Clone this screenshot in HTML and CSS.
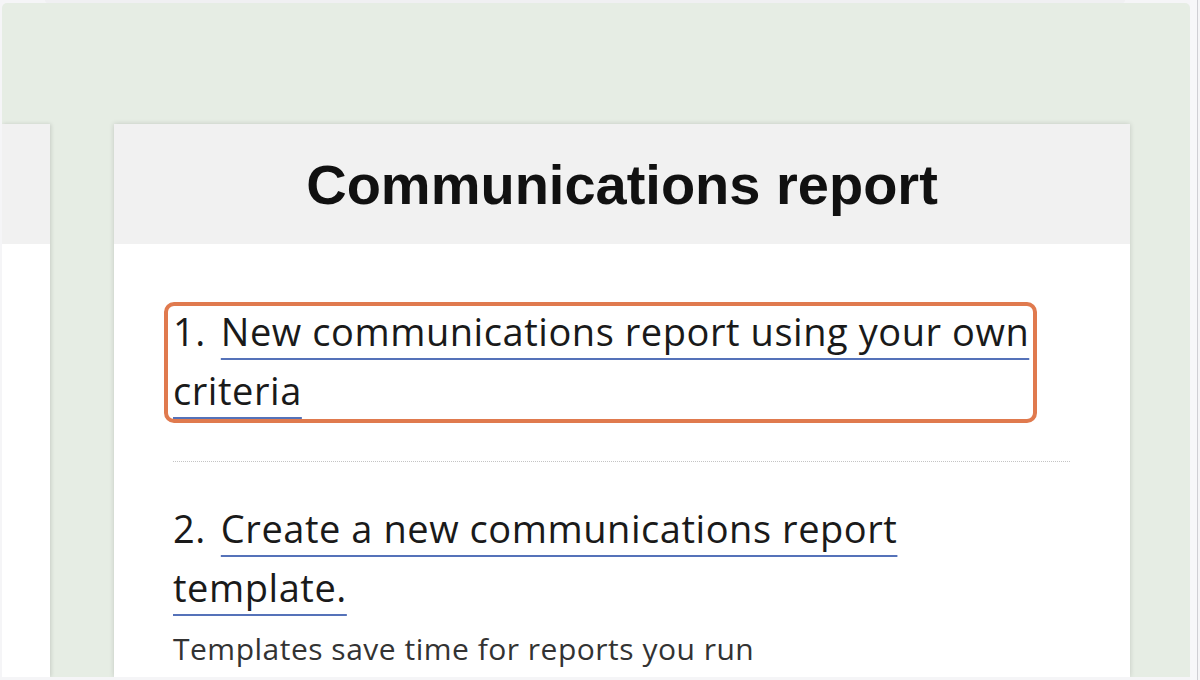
FILE: index.html
```html
<!DOCTYPE html>
<html lang="en">
<head>
<meta charset="utf-8">
<title>Communications report</title>
<link rel="stylesheet" href="styles.css">
</head>
<body>
<div class="screen">
  <div class="main-col">
    <div class="top-strip"><div class="prev-card"></div></div>
    <div class="stage">
      <div class="side-card">
        <div class="side-head"></div>
        <div class="side-body"></div>
      </div>
      <section class="card">
        <header class="card-head">
          <h1 class="card-title">Communications report</h1>
        </header>
        <div class="card-body">
          <div class="item item-highlight">
            <p class="item-text"><span class="item-num">1.</span><a class="item-link" href="#">New communications report using your own criteria</a></p>
          </div>
          <hr class="sep">
          <div class="item">
            <p class="item-text"><span class="item-num">2.</span><a class="item-link" href="#">Create a new communications report template.</a></p>
            <p class="item-note">Templates save time for reports you run</p>
          </div>
        </div>
      </section>
    </div>
  </div>
  <div class="rail"></div>
</div>
</body>
</html>
```

FILE: styles.css
```css
html, body {
  margin: 0;
  padding: 0;
  height: 100%;
}
body {
  background: #f5f5f7;
  overflow: hidden;
}
.screen {
  display: flex;
  width: 1200px;
  height: 680px;
}
.main-col {
  width: 1190px;
  display: flex;
  flex-direction: column;
}
.top-strip {
  height: 3px;
  display: flex;
  padding-left: 45px;
}
.prev-card {
  width: 1080px;
  height: 3px;
  background: #f0f0f2;
  border-radius: 0 0 4px 4px;
}
.stage {
  margin-left: 2px;
  height: 674px;
  background: #e6ede4;
  border-radius: 5px 5px 0 0;
  overflow: hidden;
  display: flex;
  gap: 64px;
  padding-top: 121px;
  box-sizing: border-box;
}
.side-card {
  width: 48px;
  flex: none;
  display: flex;
  flex-direction: column;
  box-shadow: 1px 0 4px rgba(0, 0, 0, 0.14);
}
.side-head {
  height: 120px;
  background: #f1f1f1;
}
.side-body {
  flex: 1;
  background: #ffffff;
}
.card {
  width: 1016px;
  flex: none;
  background: #ffffff;
  box-shadow: 0 0 5px rgba(0, 0, 0, 0.16);
  display: flex;
  flex-direction: column;
}
.card-head {
  height: 120px;
  background: #f1f1f1;
  display: flex;
  align-items: center;
  justify-content: center;
}
.card-title {
  margin: 0;
  font-family: "Liberation Sans", Arial, sans-serif;
  font-weight: 700;
  font-size: 56px;
  color: #111;
  letter-spacing: 0;
}
.card-body {
  padding: 58px 60px 0 59px;
}
.item {
  font-family: "Open Sans", "Noto Sans", sans-serif;
}
.item-highlight {
  position: relative;
}
.item-highlight::after {
  content: "";
  position: absolute;
  left: -9px;
  right: 33px;
  top: 0;
  bottom: -3px;
  border: 4px solid #e07a4e;
  border-radius: 10px;
  pointer-events: none;
}
.item-text {
  margin: 0;
  font-size: 38px;
  letter-spacing: 0.55px;
  line-height: 59px;
  color: #1a1a1a;
}
.item-num {
  margin-right: 15px;
}
.item-link {
  color: #1a1a1a;
  text-decoration: underline;
  text-decoration-color: #5572b9;
  text-decoration-thickness: 2px;
  text-underline-offset: 12px;
}
.sep {
  border: 0;
  border-top: 1px dotted #c4c4c4;
  margin: 41px 0 37px 0;
  height: 0;
}
.item-note {
  margin: 11px 0 0 0;
  font-size: 30px;
  letter-spacing: 0.5px;
  color: #333;
}
.rail {
  width: 7px;
  border-right: 1px solid #cfcfd4;
  background: #f7f7f9;
}
```
